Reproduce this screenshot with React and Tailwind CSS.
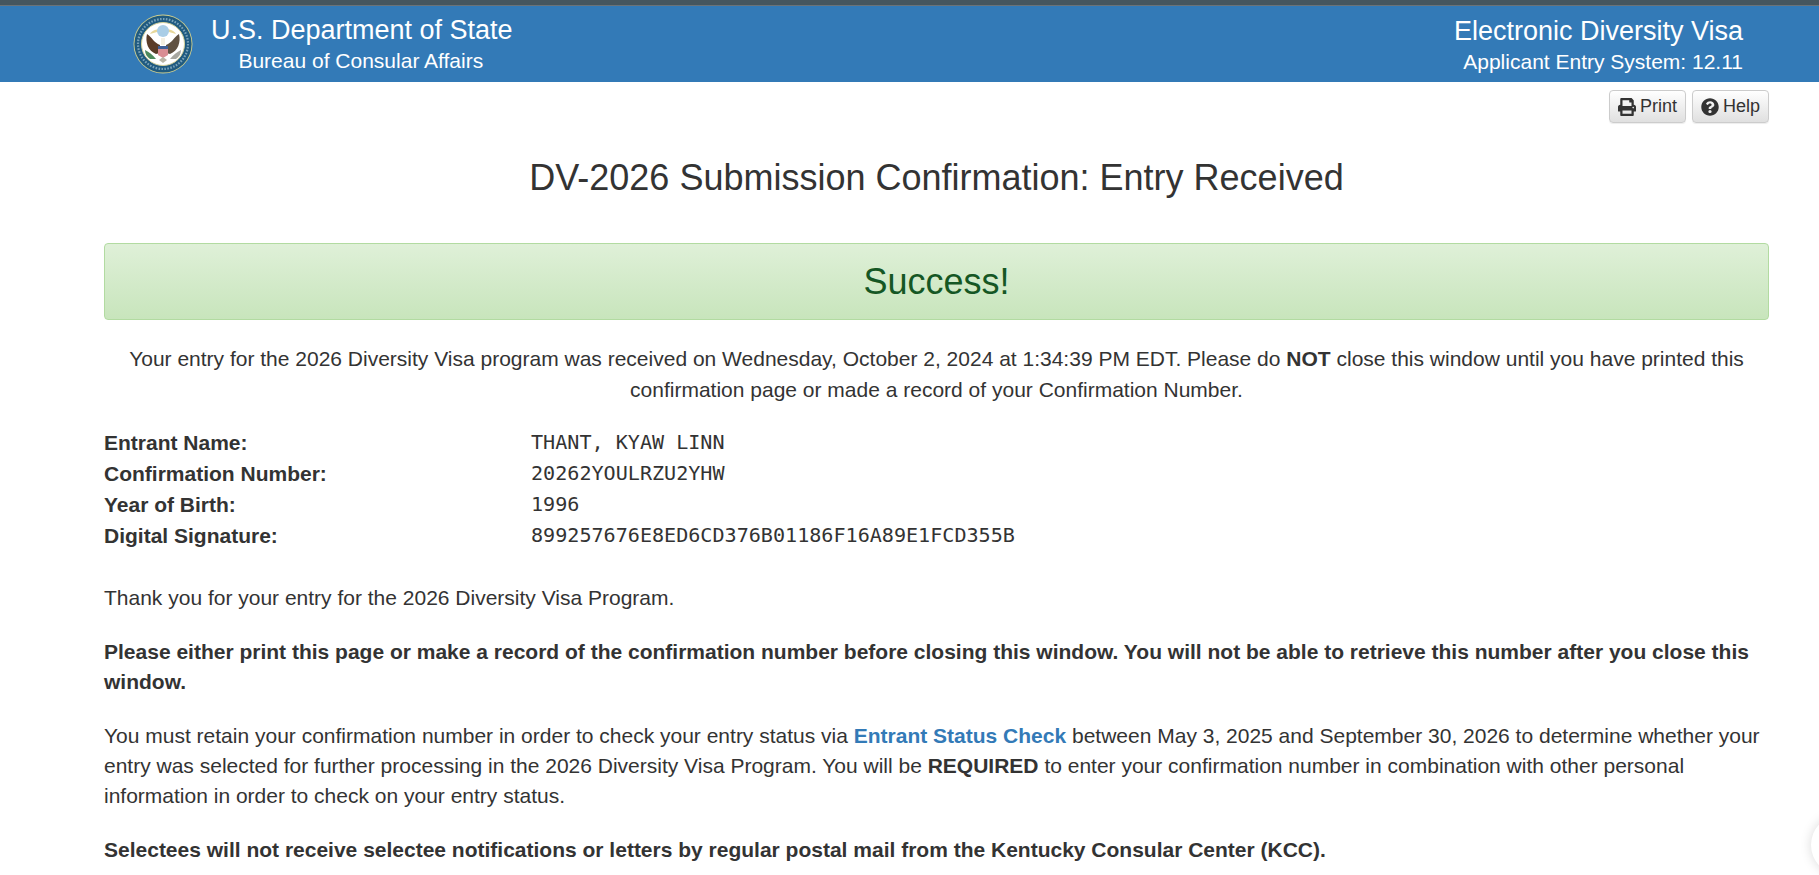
import React from "react";
import { FaPrint, FaQuestionCircle } from "react-icons/fa";

function Seal() {
  return (
    <svg width="60" height="60" viewBox="0 0 60 60" className="block">
      <circle cx="30" cy="30" r="29.5" fill="#cfcf8f" />
      <circle cx="30" cy="30" r="28.6" fill="#1f5a80" />
      <circle cx="30" cy="30" r="25" fill="none" stroke="#9fc0d2" strokeWidth="2.2" strokeDasharray="1.6 1.4" opacity="0.7" />
      <circle cx="30" cy="30" r="21.5" fill="#ffffff" stroke="#d8d39a" strokeWidth="1" />
      <path d="M17 20 C20 13 40 13 43 20 L36 18 H24 Z" fill="#e6d79a" />
      <circle cx="30" cy="17" r="6" fill="#a9cde6" />
      <path d="M27 31 C21 29 19 23 14 20 C12 28 15 37 23 40 L27 39 Z" fill="#5a3c28" />
      <path d="M33 31 C39 29 41 23 46 20 C48 28 45 37 37 40 L33 39 Z" fill="#5f5142" />
      <path d="M25 32 H35 V41 L30 44 L25 41 Z" fill="#d98d93" />
      <rect x="25" y="32" width="10" height="3" fill="#3f5f96" />
      <path d="M12 36 C16 38 20 41 23 45 L17 45 C14 43 12 40 12 36 Z" fill="#4d8a5c" />
      <path d="M48 36 C44 38 40 41 37 45 L43 45 C46 43 48 40 48 36 Z" fill="#a7a7a0" />
      <path d="M28 24 H32 V31 H28 Z" fill="#f3efe2" />
      <path d="M26 46 L30 43 L34 46 L30 49 Z" fill="#b9b5a6" />
    </svg>
  );
}

function Btn({ icon, label }) {
  return (
    <button className="flex items-center h-[33px] px-[8px] gap-[4px] border border-[#ccc] rounded-[4px] bg-gradient-to-b from-white to-[#e0e0e0] shadow-[0_1px_1px_rgba(0,0,0,0.075)] text-[18px] text-[#333]">
      {icon}
      {label}
    </button>
  );
}

const rows = [
  ["Entrant Name:", "THANT, KYAW LINN"],
  ["Confirmation Number:", "20262YOULRZU2YHW"],
  ["Year of Birth:", "1996"],
  ["Digital Signature:", "899257676E8ED6CD376B01186F16A89E1FCD355B"],
];

export default function App() {
  return (
    <div className="h-[875px] overflow-hidden bg-white text-[#333] font-['Liberation_Sans',Arial,sans-serif] relative">
      <div className="h-[5px] bg-[#45565f] border-b border-[#6b7378] box-content" />
      <header className="h-[76px] bg-[#337ab7] text-white flex justify-between">
        <div className="flex ml-[133px] items-start">
          <div className="mt-[8px]"><Seal /></div>
          <div className="ml-[18px] flex flex-col items-center">
            <div className="text-[27px] leading-[30px] mt-[9px]">U.S. Department of State</div>
            <div className="text-[21px] leading-[24px] mt-[4px] mr-[2px]">Bureau of Consular Affairs</div>
          </div>
        </div>
        <div className="mr-[76px] flex flex-col items-end">
          <div className="text-[27px] leading-[30px] mt-[10px]">Electronic Diversity Visa</div>
          <div className="text-[21px] leading-[24px] mt-[4px]">Applicant Entry System: 12.11</div>
        </div>
      </header>
      <main className="mx-[104px] w-[1665px]">
        <div className="flex justify-end gap-[6px] mt-[8px]">
          <Btn icon={<FaPrint className="text-[18px]" />} label="Print" />
          <Btn icon={<FaQuestionCircle className="text-[18px]" />} label="Help" />
        </div>
        <h1 className="text-[36px] leading-[40px] text-center mt-[35px] font-normal">DV-2026 Submission Confirmation: Entry Received</h1>
        <div className="mt-[45px] h-[77px] rounded-[4px] border border-[#b2dba1] bg-gradient-to-b from-[#dff0d8] to-[#c8e5bc] shadow-[0_1px_0_rgba(255,255,255,0.25)] flex items-center justify-center text-[36px] text-[#155724]">
          Success!
        </div>
        <p className="text-[21px] leading-[31px] text-center mt-[23px]">
          Your entry for the 2026 Diversity Visa program was received on Wednesday, October 2, 2024 at 1:34:39 PM EDT. Please do <b>NOT</b> close this window until you have printed this confirmation page or made a record of your Confirmation Number.
        </p>
        <div className="mt-[22px]">
          {rows.map(([k, v]) => (
            <div key={k} className="flex h-[31px] items-center text-[21px]">
              <div className="w-[427px] font-bold">{k}</div>
              <div className="font-['DejaVu_Sans_Mono',monospace] text-[20.1px]">{v}</div>
            </div>
          ))}
        </div>
        <p className="text-[21px] leading-[30px] mt-[32px]">Thank you for your entry for the 2026 Diversity Visa Program.</p>
        <p className="text-[21px] leading-[30px] mt-[24px] font-bold">
          Please either print this page or make a record of the confirmation number before closing this window. You will not be able to retrieve this number after you close this window.
        </p>
        <p className="text-[21px] leading-[30px] mt-[24px]">
          You must retain your confirmation number in order to check your entry status via <a className="font-bold text-[#337ab7]">Entrant Status Check</a> between May 3, 2025 and September 30, 2026 to determine whether your entry was selected for further processing in the 2026 Diversity Visa Program. You will be <b>REQUIRED</b> to enter your confirmation number in combination with other personal information in order to check on your entry status.
        </p>
        <p className="text-[21px] leading-[30px] mt-[24px] font-bold">
          Selectees will not receive selectee notifications or letters by regular postal mail from the Kentucky Consular Center (KCC).
        </p>
      </main>
      <div className="absolute left-[1811px] top-[815px] w-[60px] h-[60px] rounded-full bg-white shadow-[0_0_12px_rgba(0,0,0,0.15)]" />
    </div>
  );
}
